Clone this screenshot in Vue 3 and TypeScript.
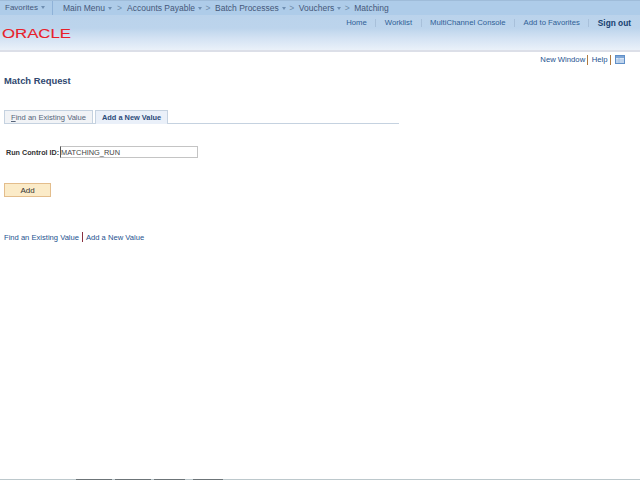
<template>
    <div class="page">
        <header class="header">
            <nav class="breadcrumbs">
                <span class="crumb favorites">Favorites<i class="caret"></i></span>
                <span class="crumb main-menu">Main Menu<i class="caret"></i></span>
                <template v-for="(item, index) in crumbs" :key="item">
                    <span class="chevron">&gt;</span>
                    <span class="crumb">{{ item }}<i v-if="index < crumbs.length - 1" class="caret"></i></span>
                </template>
            </nav>
            <div class="brand-row">
                <svg class="logo" width="72" height="13" viewBox="0 0 72 13">
                    <text x="0" y="10.5" textLength="69" lengthAdjust="spacingAndGlyphs" class="logo-text">ORACLE</text>
                </svg>
                <div class="universal">
                    <template v-for="(link, index) in links" :key="link">
                        <span v-if="index > 0" class="uni-sep"></span>
                        <a class="uni-link">{{ link }}</a>
                    </template>
                    <span class="uni-sep"></span>
                    <a class="uni-link signout">Sign out</a>
                </div>
            </div>
        </header>

        <div class="page-tools">
            <a class="link">New Window</a>
            <span class="bar"></span>
            <a class="link">Help</a>
            <span class="bar"></span>
            <svg class="tool-icon" width="10" height="9" viewBox="0 0 10 9">
                <rect x="0.5" y="0.5" width="9" height="8" fill="#dbe6f5" stroke="#5f8fc8" />
                <rect x="1" y="1" width="8" height="2" fill="#7ea6d6" />
                <path d="M1 5h8M1 7h8M4 3v5" stroke="#a4c2e4" stroke-width="1" />
            </svg>
        </div>

        <main class="content">
            <h1 class="title">Match Request</h1>

            <div class="tabs">
                <div class="tab"><u>F</u>ind an Existing Value</div>
                <div class="tab active">Add a New Value</div>
            </div>

            <div class="field">
                <label class="field-label">Run Control ID:</label>
                <input class="field-input" type="text" value="MATCHING_RUN" />
            </div>

            <button class="add-btn" type="button">Add</button>

            <div class="bottom-links">
                <a class="link">Find an Existing Value</a>
                <span class="bar dark"></span>
                <a class="link">Add a New Value</a>
            </div>
        </main>

        <div class="footer-line">
            <span
                v-for="seg in footerSegments"
                :key="seg.width + '-' + seg.gap"
                class="footer-seg"
                :style="{ width: seg.width + 'px', marginRight: seg.gap + 'px' }"
            ></span>
        </div>
    </div>
</template>

<script setup lang="ts">
interface FooterSegment {
    width: number
    gap: number
}

const crumbs: string[] = ['Accounts Payable', 'Batch Processes', 'Vouchers', 'Matching']
const links: string[] = ['Home', 'Worklist', 'MultiChannel Console', 'Add to Favorites']
const footerSegments: FooterSegment[] = [
    { width: 36, gap: 3 },
    { width: 36, gap: 3 },
    { width: 31, gap: 8 },
    { width: 30, gap: 0 }
]
</script>

<style>
html,
body {
    margin: 0;
    background: #fff;
}
</style>

<style scoped>
.page {
    position: relative;
    width: 640px;
    height: 480px;
    overflow: hidden;
    display: flex;
    flex-direction: column;
    background: #fff;
    font-family: "Liberation Sans", Arial, sans-serif;
    font-size: 7.6px;
}

.header {
    height: 52px;
    box-sizing: border-box;
    border-bottom: 2px solid #dcdfe8;
    background: linear-gradient(#b9d2eb 0, #bcd4ec 28px, #d3e2f3 38px, #eaf1f9 50px);
}

.breadcrumbs {
    height: 15px;
    box-sizing: border-box;
    padding-left: 5px;
    display: flex;
    align-items: center;
    font-size: 8.5px;
    color: #45587a;
    border-top: 1px solid #9fbcd9;
    background: #aecce9;
}

.crumb {
    white-space: nowrap;
}

.favorites {
    width: 47px;
    height: 14px;
    line-height: 14px;
    font-size: 8px;
    border-right: 1px solid #8fb2d8;
    margin-right: 10px;
}

.caret {
    display: inline-block;
    margin-left: 3px;
    vertical-align: 1px;
    border-left: 2.5px solid transparent;
    border-right: 2.5px solid transparent;
    border-top: 3px solid #6f8fb2;
}

.chevron {
    margin: 0 4.5px 0 3.5px;
    color: #6f8cab;
}

.main-menu + .chevron {
    margin: 0 5px;
}

.brand-row {
    display: flex;
    justify-content: space-between;
    height: 35px;
}

.logo {
    margin: 12px 0 0 2px;
}

.logo-text {
    font-family: "Liberation Sans", Arial, sans-serif;
    font-size: 12px;
    fill: #e8202a;
    stroke: #e8202a;
    stroke-width: 0.1px;
}

.universal {
    display: flex;
    align-items: center;
    height: 15px;
    padding-right: 9px;
    font-size: 7.72px;
}

.uni-link {
    color: #2f5f96;
}

.uni-sep {
    width: 1px;
    height: 8px;
    margin: 0 8.5px;
    background: #a8c0da;
}

.signout {
    font-size: 8.3px;
    font-weight: bold;
    color: #16406f;
}

.page-tools {
    height: 15px;
    padding-right: 15px;
    display: flex;
    align-items: center;
    justify-content: flex-end;
    gap: 2px;
    font-size: 7.7px;
}

.page-tools .bar {
    margin: 0 1.5px 0 0;
}

.tool-icon {
    margin-left: 1px;
}

.link {
    color: #24528f;
}

.bar {
    width: 1px;
    height: 10px;
    margin: 0 1px;
    background: #b07a40;
}

.bar.dark {
    background: #8a3040;
}

.content {
    padding: 8px 0 0 4px;
}

.title {
    margin: 0;
    font-size: 9.4px;
    font-weight: bold;
    line-height: 11px;
    color: #30486f;
}

.tabs {
    margin-top: 24px;
    width: 395px;
    height: 14px;
    box-sizing: border-box;
    border-bottom: 1px solid #c5d2e0;
    display: flex;
    gap: 2px;
}

.tab {
    height: 13px;
    padding: 0 6px;
    line-height: 13px;
    box-sizing: border-box;
    background: #f1f3f6;
    border: 1px solid #c5d2e0;
    border-bottom: none;
    color: #56657a;
}

.tab.active {
    height: 14px;
    font-size: 7.4px;
    background: #eaf0f9;
    color: #2c4a78;
    font-weight: bold;
}

.field {
    margin-top: 22px;
    display: flex;
    align-items: center;
    padding-left: 2px;
}

.field-label {
    width: 54px;
    font-size: 7.2px;
    font-weight: bold;
    color: #333;
}

.field-input {
    width: 138px;
    height: 12px;
    box-sizing: border-box;
    padding: 0;
    border: 1px solid #c4c4c4;
    border-left-color: #555;
    font-family: inherit;
    font-size: 7.4px;
    color: #444;
    outline: none;
    background: #fff;
}

.add-btn {
    display: block;
    margin-top: 25px;
    width: 47px;
    height: 14px;
    padding: 0;
    box-sizing: border-box;
    border: 1px solid #e3bd8c;
    background: #fbebc8;
    font-family: inherit;
    font-size: 8px;
    color: #333;
}

.bottom-links {
    margin-top: 35px;
    display: flex;
    align-items: center;
    gap: 2px;
}

.footer-line {
    position: absolute;
    left: 0;
    bottom: 0;
    width: 100%;
    height: 1px;
    padding-left: 76px;
    box-sizing: border-box;
    display: flex;
    background: #bcc8cc;
}

.footer-seg {
    background: #6c7478;
}
</style>
